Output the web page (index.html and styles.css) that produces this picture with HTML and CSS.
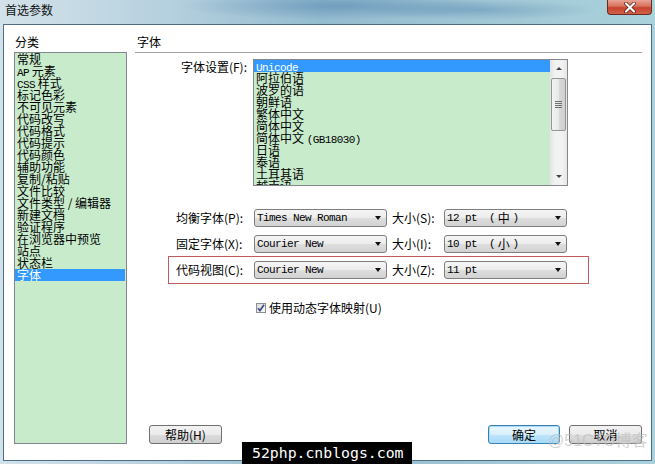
FILE: index.html
```html
<!DOCTYPE html>
<html>
<head>
<meta charset="utf-8">
<link rel="stylesheet" href="styles.css">
</head>
<body>
<div class="window">
  <div class="titlebar">
    <span class="title">首选参数</span>
    <div class="close">
      <svg width="16" height="11" viewBox="0 0 16 11"><path d="M4 1.5 L12 9.5 M12 1.5 L4 9.5" stroke="#5a1a12" stroke-width="3.6" stroke-linecap="round"/><path d="M4 1.5 L12 9.5 M12 1.5 L4 9.5" stroke="#ffffff" stroke-width="2.2" stroke-linecap="round"/></svg>
    </div>
  </div>
  <div class="client">
    <div class="left">
      <div class="head">分类</div>
      <ul class="catlist">
        <li>常规</li>
        <li><span class="mono">AP</span> 元素</li>
        <li><span class="mono">CSS</span> 样式</li>
        <li>标记色彩</li>
        <li>不可见元素</li>
        <li>代码改写</li>
        <li>代码格式</li>
        <li>代码提示</li>
        <li>代码颜色</li>
        <li>辅助功能</li>
        <li>复制/粘贴</li>
        <li>文件比较</li>
        <li>文件类型 / 编辑器</li>
        <li>新建文档</li>
        <li>验证程序</li>
        <li>在浏览器中预览</li>
        <li>站点</li>
        <li>状态栏</li>
        <li class="sel">字体</li>
      </ul>
    </div>
    <div class="right">
      <div class="head rhead">字体</div>
      <div class="fontset">
        <div class="flabel">字体设置(F):</div>
        <div class="listbox">
          <ul class="items">
            <li class="sel"><span class="mono">Unicode</span></li>
            <li>阿拉伯语</li>
            <li>波罗的语</li>
            <li>朝鲜语</li>
            <li>繁体中文</li>
            <li>简体中文</li>
            <li>简体中文 <span class="mono">(GB18030)</span></li>
            <li>日语</li>
            <li>泰语</li>
            <li>土耳其语</li>
            <li>越南语</li>
          </ul>
          <div class="vscroll">
            <div class="sbtn"><span class="tri up"></span></div>
            <div class="thumb"><span class="grip"></span><span class="grip"></span><span class="grip"></span><span class="grip"></span></div>
            <div class="strack"></div>
            <div class="sbtn"><span class="tri down"></span></div>
          </div>
        </div>
      </div>
      <div class="row r1">
        <div class="rlabel">均衡字体(P):</div>
        <div class="combo wide"><span class="mono">Times New Roman</span><span class="arrow"></span></div>
        <div class="slabel">大小(S):</div>
        <div class="combo size"><span class="mono">12 pt&nbsp;&nbsp;(</span> 中 <span class="mono">)</span><span class="arrow"></span></div>
      </div>
      <div class="row r2">
        <div class="rlabel">固定字体(X):</div>
        <div class="combo wide"><span class="mono">Courier New</span><span class="arrow"></span></div>
        <div class="slabel">大小(I):</div>
        <div class="combo size"><span class="mono">10 pt&nbsp;&nbsp;(</span> 小 <span class="mono">)</span><span class="arrow"></span></div>
      </div>
      <div class="row r3">
        <div class="rlabel">代码视图(C):</div>
        <div class="combo wide"><span class="mono">Courier New</span><span class="arrow"></span></div>
        <div class="slabel">大小(Z):</div>
        <div class="combo size"><span class="mono">11 pt</span><span class="arrow"></span></div>
      </div>
      <div class="checkrow">
        <span class="checkbox"><svg width="8" height="8" viewBox="0 0 8 8"><path d="M1 4.2 L3 6.6 L7 0.8" fill="none" stroke="#3b4f8c" stroke-width="1.7"/></svg></span>
        <span class="ctext">使用动态字体映射(U)</span>
      </div>
      <div class="buttons">
        <div class="btn help">帮助(H)</div>
        <div class="spacer"></div>
        <div class="btn ok">确定</div>
        <div class="btn cancel">取消</div>
      </div>
    </div>
  </div>
  <div class="wm">52php.cnblogs.com</div>
  <div class="wm2">@51CTO博客</div>
</div>
</body>
</html>
```
FILE: styles.css
```css
html, body {
  margin: 0;
  padding: 0;
}
body {
  width: 655px;
  height: 464px;
  overflow: hidden;
  font-family: "Noto Sans CJK SC", "Liberation Sans", sans-serif;
  font-size: 12px;
  color: #000;
}
ul {
  list-style: none;
  margin: 0;
  padding: 0;
}
.mono {
  font-family: "Liberation Mono", "Noto Sans CJK SC", monospace;
  font-size: 11px;
  letter-spacing: -0.6px;
}
.window {
  position: relative;
  width: 655px;
  height: 464px;
  display: flex;
  flex-direction: column;
  background:
    radial-gradient(ellipse 160px 14px at 340px 6px, rgba(70,120,170,0.45), rgba(70,120,170,0) 100%),
    radial-gradient(ellipse 120px 10px at 480px 10px, rgba(70,120,170,0.35), rgba(70,120,170,0) 100%),
    linear-gradient(90deg, #d3e2ea 0px, #b9d2e0 150px, #94bccf 320px, #a3c9d6 520px, #a9d2dc 655px);
}
.titlebar {
  height: 24px;
  display: flex;
  align-items: flex-start;
  flex: none;
}
.title {
  padding: 3px 0 0 5px;
  line-height: 14px;
  font-size: 12px;
  color: #111;
}
.close {
  margin-left: auto;
  margin-right: 3px;
  width: 45px;
  height: 15px;
  box-sizing: border-box;
  border: 1px solid #6a2a20;
  border-top: none;
  border-radius: 0 0 4px 4px;
  background: linear-gradient(#e9a595 0%, #d7705c 45%, #c7432c 55%, #d2614a 100%);
  display: flex;
  align-items: center;
  justify-content: center;
}
.close svg {
  display: block;
}
.client {
  flex: 1;
  margin: 0 3px 3px 3px;
  border: 1px solid #4f6f86;
  background: #fff;
  display: flex;
  padding: 0 9px 16px 10px;
  gap: 8px;
}
.left {
  width: 113px;
  display: flex;
  flex-direction: column;
}
.head {
  height: 27px;
  box-sizing: border-box;
  display: flex;
  align-items: flex-end;
  padding: 0 0 3px 1px;
  line-height: 14px;
  flex: none;
}
.catlist {
  flex: 1;
  border: 1px solid #828790;
  background: #c8ebcc;
  padding-top: 0;
}
.catlist li {
  height: 12px;
  line-height: 12px;
  padding-left: 2px;
  white-space: nowrap;
}
.catlist li.sel {
  background: #3399ff;
  color: #fff;
  margin-right: 1px;
}
.right {
  flex: 1;
  display: flex;
  flex-direction: column;
}
.rhead {
  border-bottom: 1px solid #a0a0a0;
  padding-left: 2px;
  height: 28px;
}
.fontset {
  display: flex;
  margin-top: 6px;
}
.flabel {
  width: 118px;
  text-align: right;
  line-height: 16px;
  padding-right: 6px;
  box-sizing: border-box;
}
.listbox {
  width: 315px;
  height: 127px;
  box-sizing: border-box;
  border: 1px solid #828790;
  background: #c8ebcc;
  display: flex;
  overflow: hidden;
}
.items {
  flex: 1;
  overflow: hidden;
}
.items li {
  height: 12px;
  line-height: 12px;
  padding-left: 2px;
  white-space: nowrap;
}
.items li.sel {
  background: #3399ff;
  color: #fff;
}
.vscroll {
  width: 17px;
  display: flex;
  flex-direction: column;
  background: linear-gradient(90deg, #e3e3e3, #f2f2f2 30%, #f2f2f2 70%, #e6e6e6);
}
.sbtn {
  height: 17px;
  display: flex;
  align-items: center;
  justify-content: center;
  flex: none;
}
.tri {
  width: 0;
  height: 0;
  border-left: 3px solid transparent;
  border-right: 3px solid transparent;
}
.tri.up {
  border-bottom: 3px solid #444;
}
.tri.down {
  border-top: 3px solid #444;
}
.thumb {
  height: 53px;
  margin: 1px 1px 0 1px;
  box-sizing: border-box;
  border: 1px solid #959595;
  border-radius: 2px;
  background: linear-gradient(90deg, #f3f3f3, #e8e8e8 50%, #d9d9d9 51%, #cfcfcf);
  display: flex;
  flex-direction: column;
  align-items: center;
  justify-content: center;
  gap: 1px;
  flex: none;
}
.grip {
  width: 7px;
  height: 1px;
  background: #6e6e6e;
}
.strack {
  flex: 1;
}
.row {
  display: flex;
  align-items: center;
  margin-left: 33px;
  width: 421px;
  box-sizing: border-box;
  border: 1px solid transparent;
  padding-left: 7px;
}
.r1 {
  margin-top: 19px;
  height: 26px;
}
.r2 {
  height: 25px;
}
.r3 {
  height: 28px;
  border-color: #c25b5b;
}
.rlabel {
  width: 78px;
  line-height: 16px;
  white-space: nowrap;
}
.slabel {
  width: 57px;
  padding-left: 5px;
  box-sizing: border-box;
  line-height: 16px;
  white-space: nowrap;
}
.combo {
  height: 18px;
  box-sizing: border-box;
  border: 1px solid #7e7e7e;
  border-radius: 3px;
  background: linear-gradient(#f5f5f5 0%, #ececec 50%, #dedede 51%, #d2d2d2 100%);
  display: flex;
  align-items: center;
  padding-left: 2px;
  white-space: pre;
  line-height: 14px;
}
.combo.wide {
  width: 133px;
}
.combo.size {
  width: 123px;
}
.arrow {
  margin-left: auto;
  margin-right: 5px;
  width: 0;
  height: 0;
  border-left: 3.5px solid transparent;
  border-right: 3.5px solid transparent;
  border-top: 4px solid #111;
}
.checkrow {
  display: flex;
  align-items: center;
  height: 14px;
  margin-top: 17px;
  padding-left: 121px;
}
.checkbox {
  width: 10px;
  height: 10px;
  box-sizing: border-box;
  border: 1px solid #8f8f8f;
  background: linear-gradient(135deg, #dcdcdc, #f8f8f8);
  display: flex;
  align-items: center;
  justify-content: center;
}
.checkbox svg {
  display: block;
}
.ctext {
  margin-left: 3px;
  line-height: 14px;
}
.buttons {
  margin-top: auto;
  display: flex;
  align-items: center;
}
.btn {
  height: 19px;
  box-sizing: border-box;
  border: 1px solid #707070;
  border-radius: 3px;
  background: linear-gradient(#f2f2f2 0%, #ebebeb 50%, #dddddd 51%, #cfcfcf 100%);
  display: flex;
  align-items: center;
  justify-content: center;
  line-height: 14px;
}
.help {
  margin-left: 14px;
  width: 73px;
}
.spacer {
  flex: 1;
}
.ok {
  width: 72px;
  border-color: #3c7fb1;
  box-shadow: inset 0 0 0 1px #a6dcf6;
  background: linear-gradient(#eaf6fd 0%, #d9f0fc 50%, #bee6fd 51%, #a7d9f5 100%);
}
.cancel {
  width: 73px;
  margin-left: 9px;
}
.wm {
  position: absolute;
  left: 242px;
  top: 442px;
  width: 170px;
  height: 22px;
  background: #000;
  color: #fff;
  font-family: "DejaVu Sans Mono", monospace;
  font-size: 14.8px;
  line-height: 22px;
  padding-left: 10px;
  box-sizing: border-box;
  white-space: nowrap;
}
.wm2 {
  position: absolute;
  left: 548px;
  top: 431px;
  color: rgba(190, 190, 190, 0.7);
  font-family: "Liberation Sans", "Noto Sans CJK SC", sans-serif;
  font-size: 16px;
  line-height: 20px;
  white-space: nowrap;
}
```
